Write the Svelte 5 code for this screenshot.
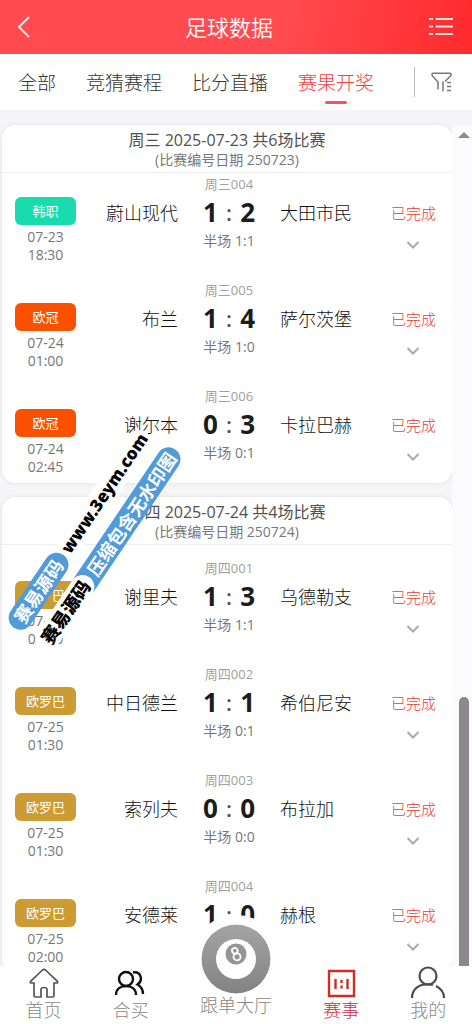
<script lang="ts">
  type Match = {
    no: string
    league: string
    color: string
    date: string
    time: string
    home: string
    away: string
    score: [number, number]
    half: string
  }

  const tabs = ['全部', '竞猜赛程', '比分直播', '赛果开奖']
  let activeTab = $state('赛果开奖')

  const gold = '#cd9b33'

  const days: { title: string; sub: string; matches: Match[] }[] = [
    {
      title: '周三 2025-07-23 共6场比赛',
      sub: '(比赛编号日期 250723)',
      matches: [
        { no: '周三004', league: '韩职', color: '#18dbae', date: '07-23', time: '18:30', home: '蔚山现代', away: '大田市民', score: [1, 2], half: '1:1' },
        { no: '周三005', league: '欧冠', color: '#fb5000', date: '07-24', time: '01:00', home: '布兰', away: '萨尔茨堡', score: [1, 4], half: '1:0' },
        { no: '周三006', league: '欧冠', color: '#fb5000', date: '07-24', time: '02:45', home: '谢尔本', away: '卡拉巴赫', score: [0, 3], half: '0:1' },
      ],
    },
    {
      title: '周四 2025-07-24 共4场比赛',
      sub: '(比赛编号日期 250724)',
      matches: [
        { no: '周四001', league: '欧罗巴', color: gold, date: '07-25', time: '01:00', home: '谢里夫', away: '乌德勒支', score: [1, 3], half: '1:1' },
        { no: '周四002', league: '欧罗巴', color: gold, date: '07-25', time: '01:30', home: '中日德兰', away: '希伯尼安', score: [1, 1], half: '0:1' },
        { no: '周四003', league: '欧罗巴', color: gold, date: '07-25', time: '01:30', home: '索列夫', away: '布拉加', score: [0, 0], half: '0:0' },
        { no: '周四004', league: '欧罗巴', color: gold, date: '07-25', time: '02:00', home: '安德莱', away: '赫根', score: [1, 0], half: '0:0' },
      ],
    },
  ]
</script>

<div class="app">
  <header class="topbar">
    <button class="iconBtn" aria-label="返回">
      <svg width="16" height="24" viewBox="0 0 16 24"><path d="M13 2 3 12l10 10" /></svg>
    </button>
    <h1>足球数据</h1>
    <button class="iconBtn menuBtn" aria-label="菜单">
      <svg width="24" height="20" viewBox="0 0 24 20">
        <path d="M0 2h4M6.500 2H24M0 9.500h4M6.500 9.500H24M0 17h4M6.500 17H24" />
      </svg>
    </button>
  </header>

  <nav class="tabs">
    {#each tabs as tab}
      <button class="tab" class:active={tab === activeTab} onclick={() => (activeTab = tab)}>{tab}</button>
    {/each}
    <button class="filter" aria-label="筛选">
      <svg width="22" height="20" viewBox="0 0 22 20">
        <path d="M7 17.500V10L2 4.500C.3 2.500.8 1.200 2.500 1.200h16c1.800 0 2.200 1.500 1 2.800L14 9.500M12 19.500V9.500" />
        <path d="M16 10.500h4M16 14.500h4M16 18.500h4" />
      </svg>
    </button>
  </nav>

  <main class="content">
    <div class="list">
      {#each days as day, i}
        <section class="card" class:scrolled={i === 0}>
          <div class="cardHead">
            <h2>{day.title}</h2>
            <p>{day.sub}</p>
          </div>
          <div class="matches">
            {#each day.matches as m}
              <article class="match">
                <div class="league">
                  <span class="badge" style="background: {m.color}">{m.league}</span>
                  <span>{m.date}</span>
                  <span>{m.time}</span>
                </div>
                <div class="team home">{m.home}</div>
                <div class="result">
                  <span class="no">{m.no}</span>
                  <strong class="score"><span>{m.score[0]}</span><i>:</i><span>{m.score[1]}</span></strong>
                  <span class="half">半场 {m.half}</span>
                </div>
                <div class="team">{m.away}</div>
                <div class="state">
                  <span>已完成</span>
                  <button aria-label="展开">
                    <svg width="14" height="8" viewBox="0 0 14 8"><path d="m1.500 1 5.500 5.500L12.500 1" /></svg>
                  </button>
                </div>
              </article>
            {/each}
          </div>
        </section>
      {/each}
    </div>
    <div class="scrollbar">
      <span class="arrow"></span>
      <span class="thumb"></span>
    </div>
  </main>

  <nav class="bottom">
    <a href="#home">
      <svg width="32" height="32" viewBox="0 0 32 32" stroke="#555" stroke-width="1.700">
        <path d="M6 16H3.500c-1.300 0-1.600-1-.7-1.900L14.500 3c1-.9 2-.9 3 0l11.700 11.100c.9.900.6 1.900-.7 1.900H26v12.500c0 1-.6 1.500-1.500 1.500H19v-7.500c0-1.200-1-2-3-2s-3 .8-3 2V30H7.500C6.600 30 6 29.500 6 28.500Z" />
      </svg>
      首页
    </a>
    <a href="#group">
      <svg width="32" height="32" viewBox="0 0 32 32" stroke="#111" stroke-width="2.400">
        <circle cx="11" cy="12" r="7" />
        <path d="M1 28c0-5.500 4-9 10-9s10 3.500 10 9M18 5.500c8-1.500 10.500 8 4.500 12 3.500 2 5.500 5 5.500 9.500" />
      </svg>
      合买
    </a>
    <a href="#follow" class="hall">
      <svg width="70" height="70" viewBox="0 0 70 70">
        <defs>
          <linearGradient id="ball" x1="0" y1="0" x2="0" y2="1">
            <stop offset="0" stop-color="#a5a4a5" />
            <stop offset="1" stop-color="#838283" />
          </linearGradient>
        </defs>
        <circle cx="35" cy="35" r="34.500" fill="url(#ball)" />
        <circle cx="35" cy="35" r="20" fill="#fff" />
        <circle cx="35" cy="30" r="10.500" fill="#969596" />
        <g stroke="#fff" stroke-width="1.800" fill="none" transform="rotate(-20 35 30)">
          <circle cx="35" cy="26.500" r="2.800" />
          <circle cx="35" cy="33" r="3.500" />
        </g>
      </svg>
      跟单大厅
    </a>
    <a href="#match" class="current">
      <svg width="32" height="32" viewBox="0 0 32 32" stroke="#cf2e22" stroke-width="2.400">
        <path d="M4 4h25v25H4ZM10.500 12v10M22.500 12v10M16.500 13v3M16.500 18.500v3" />
      </svg>
      赛事
    </a>
    <a href="#mine">
      <svg width="36" height="34" viewBox="0 0 36 34" stroke="#4a4a4a" stroke-width="2.200">
        <circle cx="18" cy="11" r="8.500" />
        <path d="M2 33c0-8 6-13.500 14-13.500 2.500 0 5-.5 7 .5M26 21c5 2.500 8 7 8 12" />
      </svg>
      我的
    </a>
  </nav>

  <div class="stamp">
    <div><span class="blue">赛易源码</span><b class="site">www.3eym.com</b></div>
    <div><b class="white">赛易源码</b><span class="blue tail">压缩包含无水印图</span></div>
  </div>
</div>

<style>
  :global(body) {
    margin: 0;
    background: #fff;
  }

  .app {
    position: relative;
    display: flex;
    flex-direction: column;
    height: 100vh;
    overflow: hidden;
    font-family: 'Open Sans', 'Noto Sans CJK SC', sans-serif;
    color: #777;
  }

  button {
    padding: 0;
    border: 0;
    background: none;
    font: inherit;
    color: inherit;
    cursor: pointer;
  }

  h1,
  h2,
  p {
    margin: 0;
    font-weight: 400;
  }

  svg {
    display: block;
    fill: none;
  }

  .topbar {
    flex: none;
    display: flex;
    align-items: center;
    justify-content: space-between;
    height: 54px;
    padding: 0 18px 0 16px;
    background: linear-gradient(100deg, #ff4b50 60%, #ff2a2c);
    color: #fff;
  }

  .topbar h1 {
    font-size: 22px;
    font-weight: 350;
    line-height: 32px;
  }

  .iconBtn {
    width: 26px;
  }

  .menuBtn {
    width: 38px;
    padding-left: 13px;
  }

  .iconBtn svg {
    stroke: #ffe4e4;
    stroke-width: 2;
  }

  .tabs {
    flex: none;
    display: flex;
    align-items: center;
    gap: 30px;
    height: 56px;
    padding: 0 19px 0 18px;
    background: #fff;
  }

  .tab {
    position: relative;
    padding-top: 2px;
    font-size: 19px;
    font-weight: 300;
    line-height: 54px;
    color: #333;
    white-space: nowrap;
  }

  .tab.active {
    color: #f54040;
  }

  .tab.active::after {
    content: '';
    position: absolute;
    left: 50%;
    bottom: 6px;
    width: 22px;
    height: 3px;
    margin-left: -11px;
    border-radius: 2px;
    background: #f5555a;
  }

  .filter {
    margin-left: auto;
    padding: 5px 0 5px 16px;
    border-left: 1px solid #bbb;
  }

  .filter svg {
    stroke: #777;
    stroke-width: 1.5;
  }

  .content {
    flex: 1;
    min-height: 0;
    display: flex;
    overflow: hidden;
    background: #f5f4f7;
  }

  .list {
    flex: 1;
    padding: 15px 0 0 2px;
  }

  .card {
    margin-bottom: 14px;
    padding-bottom: 4px;
    border-radius: 14px;
    background: #fff;
    box-shadow: 0 0 5px rgba(0, 0, 0, 0.08);
    overflow: hidden;
  }

  .cardHead {
    position: relative;
    padding: 5px 0 2px;
    border-bottom: 1px solid #eee;
    background: #fff;
    text-align: center;
    line-height: 20px;
  }

  .cardHead h2 {
    font-size: 16px;
    line-height: 20px;
    color: #505050;
  }

  .cardHead p {
    font-size: 14px;
  }

  .scrolled .matches {
    margin-top: -12px;
  }

  .match {
    display: grid;
    grid-template-columns: 61px 1fr 102px 1fr 54px;
    height: 106px;
    padding: 0 16px 0 13px;
    font-size: 14px;
    line-height: 18px;
  }

  .league,
  .result {
    display: flex;
    flex-direction: column;
    align-items: center;
  }

  .league {
    padding-top: 36px;
  }

  .badge {
    width: 100%;
    margin-bottom: 3px;
    border-radius: 6px;
    color: #fff;
    font-size: 13px;
    line-height: 28px;
    text-align: center;
  }

  .team {
    padding-top: 32px;
    font-size: 18px;
    font-weight: 300;
    line-height: 40px;
    color: #111;
    white-space: nowrap;
  }

  .home {
    text-align: right;
  }

  .result {
    padding-top: 14px;
  }

  .no {
    font-size: 13px;
    color: #a0a0a0;
  }

  .score {
    display: flex;
    justify-content: space-between;
    width: 52px;
    font-size: 26px;
    line-height: 39px;
    color: #1c1c1c;
  }

  .score i {
    font-style: normal;
    font-weight: 600;
    font-size: 22px;
    color: #555;
  }

  .state {
    display: flex;
    flex-direction: column;
    align-items: flex-end;
    padding-top: 32px;
    font-size: 15px;
    font-weight: 300;
    line-height: 40px;
    color: #f03838;
  }

  .state button {
    height: 24px;
    padding: 0 16px;
  }

  .state svg {
    stroke: #aaa;
    stroke-width: 2;
  }

  .scrollbar {
    flex: none;
    display: flex;
    flex-direction: column;
    align-items: center;
    justify-content: space-between;
    width: 20px;
    margin-top: 15px;
    background: #fbfafc;
  }

  .arrow {
    margin: 7px 0 0 4px;
    border: 6px solid transparent;
    border-top: 0;
    border-bottom: 6px solid #8b898c;
  }

  .thumb {
    width: 10px;
    height: 32%;
    margin-left: 4px;
    border-radius: 5px 5px 0 0;
    background: #8b898c;
  }

  .bottom {
    position: relative;
    flex: none;
    display: flex;
    justify-content: space-around;
    align-items: flex-end;
    height: 58px;
    background: #fff;
  }

  .bottom a {
    display: flex;
    flex-direction: column;
    align-items: center;
    padding-bottom: 3px;
    font-size: 18px;
    font-weight: 300;
    line-height: 22px;
    color: #888;
    text-decoration: none;
  }

  .bottom .hall {
    padding-bottom: 8px;
  }

  .hall svg {
    border-radius: 50%;
    background: #fff;
    box-shadow: 0 0 0 9px #fff;
  }

  .bottom .current {
    color: #d03040;
  }

  .stamp {
    position: absolute;
    left: 4px;
    top: 621px;
    display: grid;
    gap: 10px;
    transform: rotate(-56deg);
    transform-origin: 0 0;
    font-size: 18px;
    font-weight: 700;
    line-height: 24px;
    white-space: nowrap;
    pointer-events: none;
  }

  .stamp div {
    display: flex;
  }

  .blue {
    padding: 0 8px;
    border-radius: 12px;
    background: #519bd8;
    color: #fff;
  }

  .tail {
    margin-left: -12px;
    padding: 0 6px 0 16px;
    border-radius: 0 12px 12px 0;
  }

  .site,
  .white {
    position: relative;
    z-index: 1;
    padding: 0 6px;
    border-radius: 12px;
    background: #fff;
    color: #000;
  }

  .site {
    padding: 0 4px;
    font-family: 'Noto Sans', sans-serif;
    font-size: 17px;
  }
</style>
